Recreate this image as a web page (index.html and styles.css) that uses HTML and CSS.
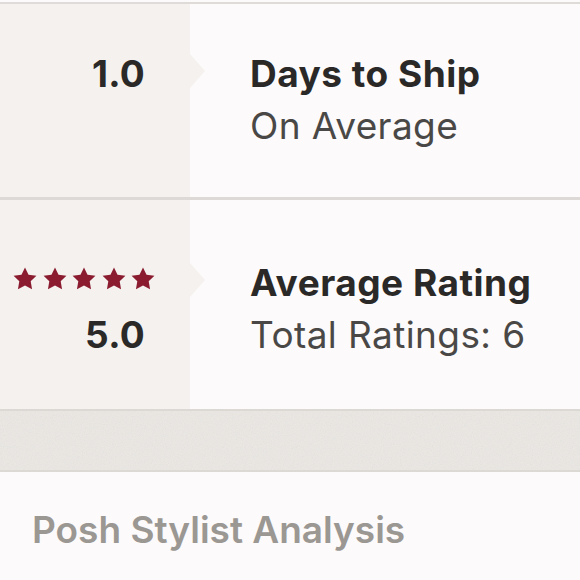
FILE: index.html
```html
<!DOCTYPE html>
<html>
<head>
<meta charset="utf-8">
<link rel="stylesheet" href="styles.css">
</head>
<body>
<div class="page">
  <div class="stat stat--first">
    <div class="stat-value">
      <div class="value-line">1.0</div>
    </div>
    <div class="stat-info">
      <div class="info-title">Days to Ship</div>
      <div class="info-sub">On Average</div>
    </div>
  </div>
  <div class="stat">
    <div class="stat-value">
      <div class="stars">
        <svg class="star" viewBox="0 0 24 24"><polygon points="12,0.5 15.53,7.65 23.41,8.79 17.71,14.35 19.05,22.21 12,18.5 4.95,22.21 6.29,14.35 0.59,8.79 8.47,7.65"/></svg>
        <svg class="star" viewBox="0 0 24 24"><polygon points="12,0.5 15.53,7.65 23.41,8.79 17.71,14.35 19.05,22.21 12,18.5 4.95,22.21 6.29,14.35 0.59,8.79 8.47,7.65"/></svg>
        <svg class="star" viewBox="0 0 24 24"><polygon points="12,0.5 15.53,7.65 23.41,8.79 17.71,14.35 19.05,22.21 12,18.5 4.95,22.21 6.29,14.35 0.59,8.79 8.47,7.65"/></svg>
        <svg class="star" viewBox="0 0 24 24"><polygon points="12,0.5 15.53,7.65 23.41,8.79 17.71,14.35 19.05,22.21 12,18.5 4.95,22.21 6.29,14.35 0.59,8.79 8.47,7.65"/></svg>
        <svg class="star" viewBox="0 0 24 24"><polygon points="12,0.5 15.53,7.65 23.41,8.79 17.71,14.35 19.05,22.21 12,18.5 4.95,22.21 6.29,14.35 0.59,8.79 8.47,7.65"/></svg>
      </div>
      <div class="value-line">5.0</div>
    </div>
    <div class="stat-info">
      <div class="info-title">Average Rating</div>
      <div class="info-sub">Total Ratings: 6</div>
    </div>
  </div>
  <div class="band">
    <svg class="noise" width="100%" height="100%">
      <filter id="grain"><feTurbulence type="fractalNoise" baseFrequency="0.9" numOctaves="2" stitchTiles="stitch"/><feColorMatrix type="saturate" values="0"/></filter>
      <rect width="100%" height="100%" filter="url(#grain)" opacity="0.12"/>
    </svg>
  </div>
  <div class="section">
    <h2 class="section-title">Posh Stylist Analysis</h2>
  </div>
</div>
</body>
</html>
```

FILE: styles.css
```css
html, body {
  margin: 0;
  padding: 0;
  background: #fcfafa;
}

.page {
  padding-top: 2px;
  font-family: "Inter", "Liberation Sans", sans-serif;
  color: #2a2928;
}

.stat {
  display: grid;
  grid-template-columns: 190px 1fr;
  border-top: 2px solid #dedbd8;
  background: #fcfafa;
  --pad-top: 57px;
  --pad-bottom: 48px;
}

.stat--first {
  --pad-top: 44px;
  --pad-bottom: 45px;
}

.stat + .stat {
  border-top: 3px solid #dcd9d6;
}

.stat-value {
  position: relative;
  background: #f4f1ee;
  padding: var(--pad-top) 45px var(--pad-bottom) 0;
  text-align: right;
}

.stat-value::after {
  content: "";
  position: absolute;
  right: -15px;
  top: calc(var(--pad-top) + 6px);
  border-top: 17px solid transparent;
  border-bottom: 17px solid transparent;
  border-left: 15px solid #f4f1ee;
}

.value-line {
  font-size: 37px;
  line-height: 52px;
  font-weight: 700;
  letter-spacing: 0.3px;
}

.stars {
  height: 52px;
  box-sizing: border-box;
  padding-top: 10px;
  display: flex;
  justify-content: flex-end;
  align-items: flex-start;
  gap: 5.5px;
  margin-right: -10px;
}

.star {
  width: 24px;
  height: 24px;
  fill: #8b1c2f;
}

.stat-info {
  padding: var(--pad-top) 0 var(--pad-bottom) 60px;
}

.info-title {
  font-size: 37px;
  line-height: 52px;
  font-weight: 700;
  letter-spacing: 0.5px;
  color: #2a2928;
}

.info-sub {
  font-size: 37px;
  line-height: 52px;
  font-weight: 400;
  letter-spacing: 0.4px;
  color: #4a4846;
}

.band {
  height: 59px;
  background: #ebe8e4;
  border-top: 2px solid #dcd9d5;
  border-bottom: 2px solid #dcd9d5;
  overflow: hidden;
}

.noise {
  display: block;
}

.section {
  padding: 32px 32px 40px;
}

.section-title {
  margin: 0;
  font-size: 37px;
  line-height: 52px;
  font-weight: 600;
  color: #9b9793;
}
```
